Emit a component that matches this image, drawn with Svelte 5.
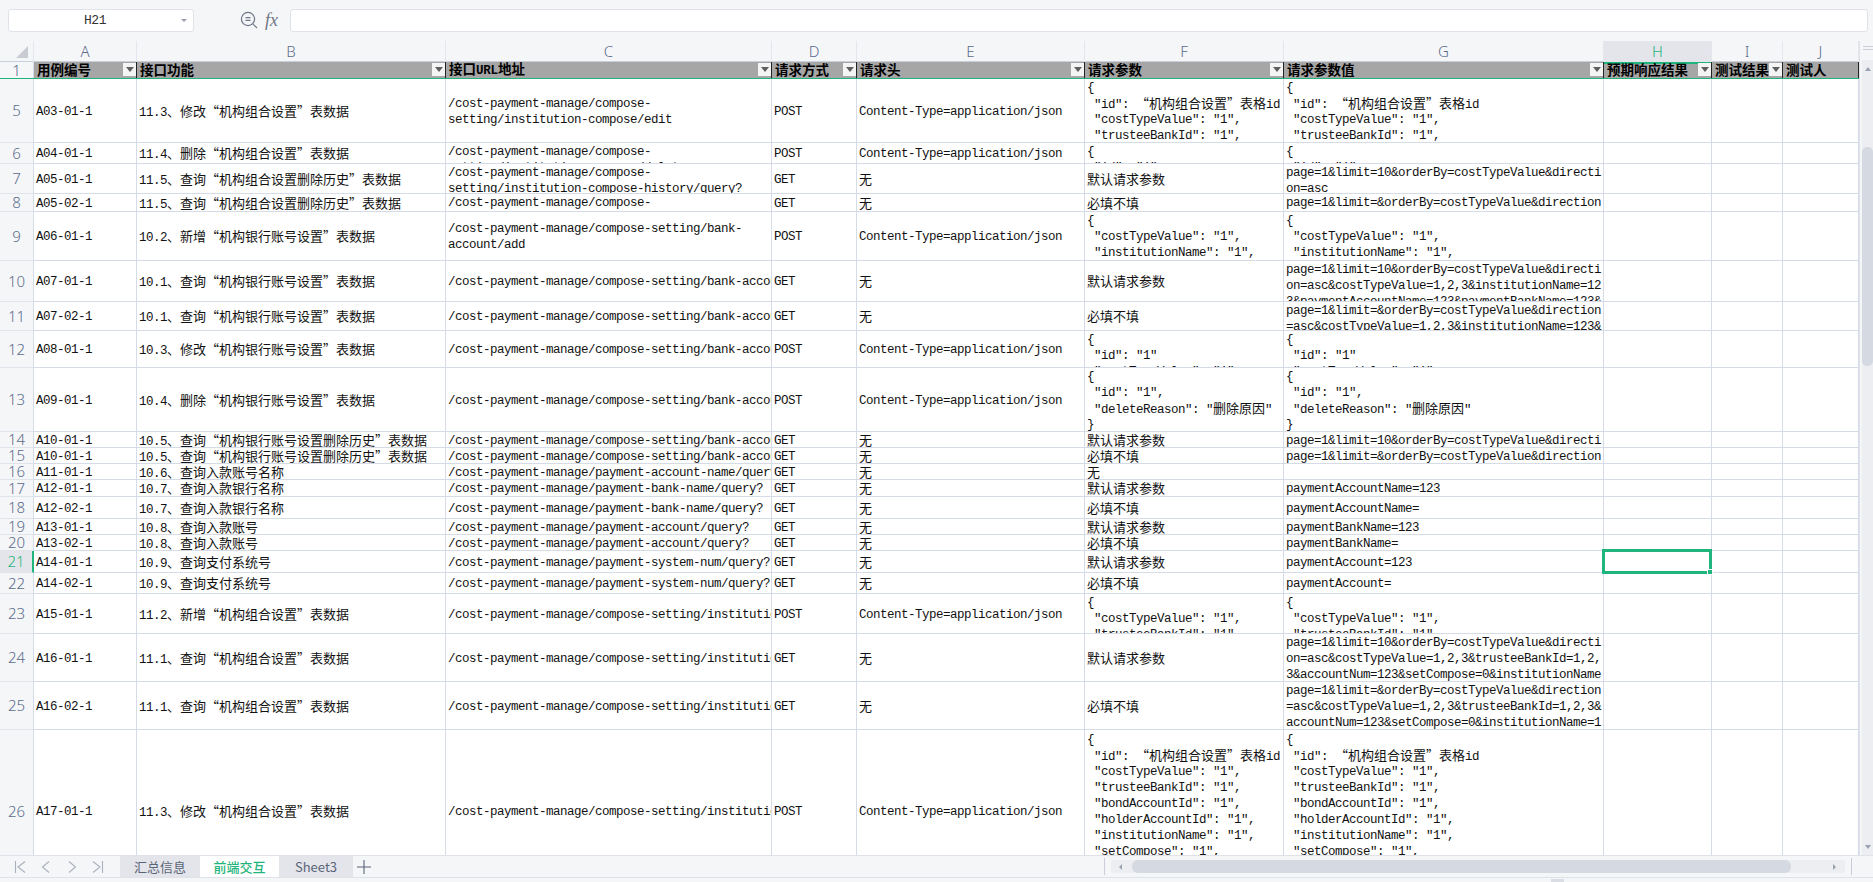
<script>
  const P = '/cost-payment-manage/';
  const CS = P + 'compose-setting/';
  const CT = 'Content-Type=application/json';
  const cols = [
    ['A', 103, '用例编号', true], ['B', 309, '接口功能', true], ['C', 326, '接口URL地址', true],
    ['D', 85, '请求方式', true], ['E', 228, '请求头', true], ['F', 199, '请求参数', true],
    ['G', 320, '请求参数值', true], ['H', 108, '预期响应结果', true], ['I', 71, '测试结果', true], ['J', 76, '测试人', false]
  ].map(([name, width, title, filter]) => ({ name, width, title, filter }));
  const template = '34px ' + cols.map((c) => c.width + 'px').join(' ');

  const D = '默认请求参数';
  const M = '必填不填';
  const N = '无';
  const LONG = '{\n "id": “机构组合设置”表格id\n "costTypeValue": "1",\n "trusteeBankId": "1",\n "bondAccountId": "1",\n "holderAccountId": "1",\n "institutionName": "1",\n "setCompose": "1",\n "accountNum": "1"\n}';
  const ORG_NEW = '{\n "costTypeValue": "1",\n "institutionName": "1",\n "paymentAccountName": "1"\n}';
  const GRP_NEW = '{\n "costTypeValue": "1",\n "trusteeBankId": "1",\n "bondAccountId": "1"\n}';
  const DEL = '{\n "id": "1",\n "deleteReason": "删除原因"\n}';
  const PAGE10 = 'page=1&limit=10&orderBy=costTypeValue&directi';
  const PAGE = 'page=1&limit=&orderBy=costTypeValue&direction';
  const bankHist = CS + 'bank-account-history/query?';

  const rows = [
    [5, 64, 'A03-01-1', '11.3、修改“机构组合设置”表数据', P + 'compose-\nsetting/institution-compose/edit', 'POST', CT, LONG, LONG],
    [6, 21, 'A04-01-1', '11.4、删除“机构组合设置”表数据', P + 'compose-\nsetting/institution-compose/delete', 'POST', CT, DEL, DEL],
    [7, 30, 'A05-01-1', '11.5、查询“机构组合设置删除历史”表数据', P + 'compose-\nsetting/institution-compose-history/query?', 'GET', N, D, PAGE10 + '\non=asc'],
    [8, 18, 'A05-02-1', '11.5、查询“机构组合设置删除历史”表数据', P + 'compose-\nsetting/institution-compose-history/query?', 'GET', N, M, PAGE + '\n=asc'],
    [9, 49, 'A06-01-1', '10.2、新增“机构银行账号设置”表数据', CS + 'bank-\naccount/add', 'POST', CT, ORG_NEW, ORG_NEW],
    [10, 41, 'A07-01-1', '10.1、查询“机构银行账号设置”表数据', CS + 'bank-account/query?', 'GET', N, D, PAGE10 + '\non=asc&costTypeValue=1,2,3&institutionName=12\n3&paymentAccountName=123&paymentBankName=123&'],
    [11, 29, 'A07-02-1', '10.1、查询“机构银行账号设置”表数据', CS + 'bank-account/query?', 'GET', N, M, PAGE + '\n=asc&costTypeValue=1,2,3&institutionName=123&'],
    [12, 37, 'A08-01-1', '10.3、修改“机构银行账号设置”表数据', CS + 'bank-account/edit', 'POST', CT, '{\n "id": "1"\n "costTypeValue": "1",\n}', '{\n "id": "1"\n "costTypeValue": "1",\n}'],
    [13, 64, 'A09-01-1', '10.4、删除“机构银行账号设置”表数据', CS + 'bank-account/delete', 'POST', CT, DEL, DEL],
    [14, 16, 'A10-01-1', '10.5、查询“机构银行账号设置删除历史”表数据', bankHist, 'GET', N, D, PAGE10],
    [15, 16, 'A10-01-1', '10.5、查询“机构银行账号设置删除历史”表数据', bankHist, 'GET', N, M, PAGE],
    [16, 16, 'A11-01-1', '10.6、查询入款账号名称', P + 'payment-account-name/query?', 'GET', N, N, ''],
    [17, 17, 'A12-01-1', '10.7、查询入款银行名称', P + 'payment-bank-name/query?', 'GET', N, D, 'paymentAccountName=123'],
    [18, 22, 'A12-02-1', '10.7、查询入款银行名称', P + 'payment-bank-name/query?', 'GET', N, M, 'paymentAccountName='],
    [19, 16, 'A13-01-1', '10.8、查询入款账号', P + 'payment-account/query?', 'GET', N, D, 'paymentBankName=123'],
    [20, 16, 'A13-02-1', '10.8、查询入款账号', P + 'payment-account/query?', 'GET', N, M, 'paymentBankName='],
    [21, 22, 'A14-01-1', '10.9、查询支付系统号', P + 'payment-system-num/query?', 'GET', N, D, 'paymentAccount=123'],
    [22, 21, 'A14-02-1', '10.9、查询支付系统号', P + 'payment-system-num/query?', 'GET', N, M, 'paymentAccount='],
    [23, 40, 'A15-01-1', '11.2、新增“机构组合设置”表数据', CS + 'institution-compose/add', 'POST', CT, GRP_NEW, GRP_NEW],
    [24, 48, 'A16-01-1', '11.1、查询“机构组合设置”表数据', CS + 'institution-compose/query?', 'GET', N, D, PAGE10 + '\non=asc&costTypeValue=1,2,3&trusteeBankId=1,2,\n3&accountNum=123&setCompose=0&institutionName'],
    [25, 48, 'A16-02-1', '11.1、查询“机构组合设置”表数据', CS + 'institution-compose/query?', 'GET', N, M, PAGE + '\n=asc&costTypeValue=1,2,3&trusteeBankId=1,2,3&\naccountNum=123&setCompose=0&institutionName=1'],
    [26, 163, 'A17-01-1', '11.3、修改“机构组合设置”表数据', CS + 'institution-compose/edit', 'POST', CT, LONG, LONG]
  ].map(([num, height, ...cells]) => ({ num, height, cells: [...cells, '', '', ''] }));

  const lines = (text) => text.split('\n');
  const runs = (line) =>
    line.split(/([\x00-\x7f]+)/).filter(Boolean).map((text) => ({ text, ascii: /^[\x00-\x7f]/.test(text) }));
</script>

<div class="app">
  <div class="formula">
    <div class="namebox"><span class="nameval">H21</span><span class="caret"></span></div>
    <svg class="zoomi" width="20" height="20" viewBox="0 0 20 20" fill="none" stroke="#6f7786" stroke-width="1.2">
      <circle cx="9" cy="9" r="6.6" />
      <path d="M6.5 7.6h5M6.5 10.4h5M13.8 13.8l4.2 4.2" />
    </svg>
    <span class="fx">fx</span>
    <div class="input"></div>
  </div>

  <div class="sheet">
    <div class="grid">
      <div class="row colhead" style="grid-template-columns: {template}">
        <div class="corner">
          <svg width="12" height="12" viewBox="0 0 12 12"><path d="M12 0v12H0z" fill="#c9ccd3" /></svg>
        </div>
        {#each cols as c}
          <div class="letter" class:active={c.name === 'H'}>{c.name}</div>
        {/each}
      </div>

      <div class="row titles" style="grid-template-columns: {template}">
        <div class="num">1</div>
        {#each cols as c}
          <div class="title" class:active={c.name === 'H'}>
            <span class="titletext">{#each runs(c.title) as r}<span class:l={r.ascii} class:c={!r.ascii}>{r.text}</span>{/each}</span>
            {#if c.filter}
              <span class="filter"><i></i></span>
            {/if}
          </div>
        {/each}
      </div>

      {#each rows as row}
        <div class="row" style="grid-template-columns: {template}; height: {row.height}px">
          <div class="num" class:current={row.num === 21}>{row.num}</div>
          {#each row.cells as cell, i}
            <div class="cell" class:selected={row.num === 21 && i === 7}>
              {#each lines(cell) as line}
                <div class="line">{#each runs(line) as r}<span class:l={r.ascii} class:c={!r.ascii}>{r.text}</span>{/each}</div>
              {/each}
            </div>
          {/each}
        </div>
      {/each}
    </div>

    <div class="vbar">
      <div class="grip"></div>
      <div class="vtrack">
        <span class="up"></span>
        <div class="vthumb"></div>
        <span class="down"></span>
      </div>
    </div>
  </div>

  <div class="tabbar">
    <div class="nav">
      <svg width="14" height="14" viewBox="0 0 14 14"><path d="M2.5 1v12M12 1.5L5 7l7 5.5" /></svg>
      <svg width="14" height="14" viewBox="0 0 14 14"><path d="M10 1.5L3.5 7l6.5 5.5" /></svg>
      <svg width="14" height="14" viewBox="0 0 14 14"><path d="M4 1.5L10.500 7 4 12.500" /></svg>
      <svg width="14" height="14" viewBox="0 0 14 14"><path d="M11.500 1v12M2 1.500L9 7l-7 5.500" /></svg>
    </div>
    <div class="tab">汇总信息</div>
    <div class="tab on">前端交互</div>
    <div class="tab short">Sheet3</div>
    <svg class="plus" width="14" height="14" viewBox="0 0 14 14"><path d="M7 0v14M0 7h14" /></svg>
    <div class="hscroll">
      <span class="sep"></span>
      <div class="htrack">
        <span class="left"></span>
        <div class="hthumb"></div>
        <span class="right"></span>
      </div>
      <span class="sep"></span>
    </div>
  </div>
  <div class="status"><span class="statusmark"></span></div>
</div>

<style>
  :global(body) {
    margin: 0;
    background: #f5f6f8;
  }
  .app {
    width: 1873px;
    height: 882px;
    display: flex;
    flex-direction: column;
    overflow: hidden;
    background: #f5f6f8;
    font-family: "Liberation Mono", "Noto Sans CJK SC", monospace;
    color: #111;
  }
  .formula {
    height: 41px;
    flex: none;
    box-sizing: border-box;
    padding: 9px 5px 9px 8px;
    display: flex;
    align-items: stretch;
  }
  .namebox,
  .input {
    box-sizing: border-box;
    background: #fff;
    border: 1px solid #dfe2e8;
    border-radius: 3px;
  }
  .namebox {
    width: 186px;
    display: flex;
    align-items: center;
    position: relative;
  }
  .nameval {
    width: 172px;
    text-align: center;
    font-size: 13px;
    letter-spacing: -0.4px;
    color: #333;
  }
  .caret {
    border-top: 3px solid #9aa0ab;
    border-left: 3px solid transparent;
    border-right: 3px solid transparent;
  }
  .zoomi {
    margin: 1px 0 0 45px;
  }
  .fx {
    width: 25px;
    margin-left: 6px;
    font: italic 18px/22px "Liberation Serif", serif;
    color: #6f7786;
  }
  .input {
    flex: 1;
  }
  .sheet {
    flex: 1 1 0;
    min-height: 0;
    display: flex;
    overflow: hidden;
  }
  .grid {
    width: 1859px;
    flex: none;
    border-right: 1px solid #dfe2e8;
    box-sizing: content-box;
    background: #fff;
  }
  .row {
    display: grid;
  }
  .colhead {
    height: 21px;
    background: #f5f6f8;
    border-bottom: 1px solid #c9cfdb;
    box-sizing: border-box;
  }
  .corner {
    display: flex;
    justify-content: flex-end;
    align-items: flex-end;
    padding: 0 5px 4px 0;
    border-right: 1px solid #e3e6ec;
  }
  .letter {
    text-align: center;
    font: 300 15px/21px "Noto Sans", sans-serif;
    color: #5a6c8c;
    border-right: 1px solid #e3e6ec;
  }
  .letter.active {
    background: #e3e5ea;
    color: #1fb57c;
  }
  .titles {
    height: 17px;
    border-bottom: 1px solid #1fb57c;
    box-sizing: border-box;
    background: #a6a6a6;
  }
  .num {
    background: #f5f6f8;
    text-align: center;
    font: 300 15px/1 "Noto Sans", sans-serif;
    color: #5a6c8c;
    border-right: 1px solid #d5dbe7;
    border-bottom: 1px solid #dfe3ea;
    display: flex;
    align-items: center;
    justify-content: center;
    min-height: 0;
    overflow: hidden;
  }
  .titles .num {
    border-bottom: none;
  }
  .num.current {
    background: #e3e5ea;
    color: #1fb57c;
    border-right: 2px solid #1fb57c;
  }
  .title {
    position: relative;
    display: flex;
    align-items: center;
    overflow: hidden;
    padding-left: 3px;
    border-right: 1px solid #222;
    min-width: 0;
  }
  .title.active {
    box-shadow: inset 0 2px 0 #1fb57c;
  }
  .titletext {
    white-space: pre;
    font-weight: 700;
    line-height: 15px;
    color: #000;
  }
  .titletext .c {
    font-size: 13.5px;
  }
  .titletext .l {
    letter-spacing: -0.2px;
  }
  .filter {
    position: absolute;
    right: 0;
    top: 1px;
    width: 13px;
    height: 13px;
    background: #f4f4f5;
    display: flex;
    align-items: center;
    justify-content: center;
  }
  .filter i {
    border-top: 5px solid #5e5e5e;
    border-left: 4px solid transparent;
    border-right: 4px solid transparent;
  }
  .cell {
    position: relative;
    min-width: 0;
    min-height: 0;
    overflow: hidden;
    box-sizing: border-box;
    padding: 0 0 0 2px;
    display: flex;
    flex-direction: column;
    justify-content: safe center;
    border-right: 1px solid #d5dbe7;
    border-bottom: 1px solid #d5dbe7;
    background: #fff;
  }
  .cell.selected {
    overflow: visible;
    z-index: 2;
  }
  .cell.selected::before {
    content: "";
    position: absolute;
    inset: -2px -1px -2px -2px;
    border: 3px solid #1fb57c;
  }
  .cell.selected::after {
    content: "";
    position: absolute;
    right: -2px;
    bottom: -3px;
    width: 4px;
    height: 4px;
    background: #1fb57c;
    border: 1px solid #fff;
  }
  .line {
    flex: none;
    height: 16px;
    line-height: 16px;
    white-space: pre;
  }
  .l {
    font-family: "Liberation Mono", monospace;
    font-size: 12.5px;
    letter-spacing: -0.5px;
  }
  .c {
    font-family: "Noto Sans CJK SC", sans-serif;
    font-size: 13px;
  }
  .vbar {
    flex: 1;
    display: flex;
    flex-direction: column;
    padding-left: 2px;
  }
  .grip {
    height: 14px;
    flex: none;
    position: relative;
    box-sizing: border-box;
    border-top: 1px solid #c9ced8;
    margin: 5px 0 0 1px;
  }
  .grip::after {
    content: "";
    display: block;
    margin-top: 2px;
    height: 1px;
    background: #c9ced8;
  }
  .vtrack {
    flex: 1;
    background: #eceef2;
    display: flex;
    flex-direction: column;
    align-items: flex-end;
    position: relative;
  }
  .up,
  .down {
    align-self: center;
    border-left: 3px solid transparent;
    border-right: 3px solid transparent;
  }
  .up {
    margin-top: 7px;
    border-bottom: 4px solid #9aa1b0;
  }
  .down {
    margin-top: auto;
    margin-bottom: 6px;
    border-top: 4px solid #9aa1b0;
  }
  .vthumb {
    width: 11px;
    height: 219px;
    margin-top: 76px;
    background: #d5d9e2;
    border-radius: 5px;
  }
  .tabbar {
    height: 22px;
    flex: none;
    box-sizing: border-box;
    border-top: 1px solid #dfe2e8;
    display: flex;
    align-items: stretch;
  }
  .nav {
    width: 120px;
    flex: none;
    box-sizing: border-box;
    padding: 0 15px 0 13px;
    display: flex;
    justify-content: space-between;
    align-items: center;
  }
  .nav path {
    fill: none;
    stroke: #aab0bc;
    stroke-width: 1.1;
  }
  .tab {
    background: #e3e5ea;
    color: #5a6478;
    font: 13px/21px "Noto Sans CJK SC", "Noto Sans", sans-serif;
    width: 80px;
    flex: none;
    text-align: center;
  }
  .tab.on {
    width: 79px;
    background: #fff;
    color: #1fb57c;
    font-weight: 500;
  }
  .tab.short {
    width: 74px;
  }
  .plus {
    align-self: center;
    margin-left: 4px;
  }
  .plus path {
    fill: none;
    stroke: #5a6478;
    stroke-width: 1.1;
  }
  .hscroll {
    margin-left: 733px;
    flex: 1;
    display: flex;
    align-items: center;
    gap: 6px;
  }
  .sep {
    width: 1px;
    height: 17px;
    background: #c9ced8;
  }
  .htrack {
    width: 734px;
    height: 13px;
    background: #eceef2;
    display: flex;
    align-items: center;
    border-radius: 2px;
  }
  .hthumb {
    width: 659px;
    height: 13px;
    margin-left: 5px;
    background: #d5d9e2;
    border-radius: 6px;
  }
  .left,
  .right {
    border-top: 3px solid transparent;
    border-bottom: 3px solid transparent;
  }
  .left {
    margin-left: 8px;
    border-right: 3px solid #9aa1b0;
    margin-right: 5px;
  }
  .right {
    margin-left: auto;
    margin-right: 9px;
    border-left: 3px solid #9aa1b0;
  }
  .status {
    flex: none;
    height: 5px;
    box-sizing: border-box;
    border-top: 1px solid #dfe2e8;
    padding-left: 1551px;
    display: flex;
    align-items: flex-end;
    overflow: hidden;
  }
  .statusmark {
    width: 13px;
    height: 3px;
    background: #dadde3;
  }
</style>
